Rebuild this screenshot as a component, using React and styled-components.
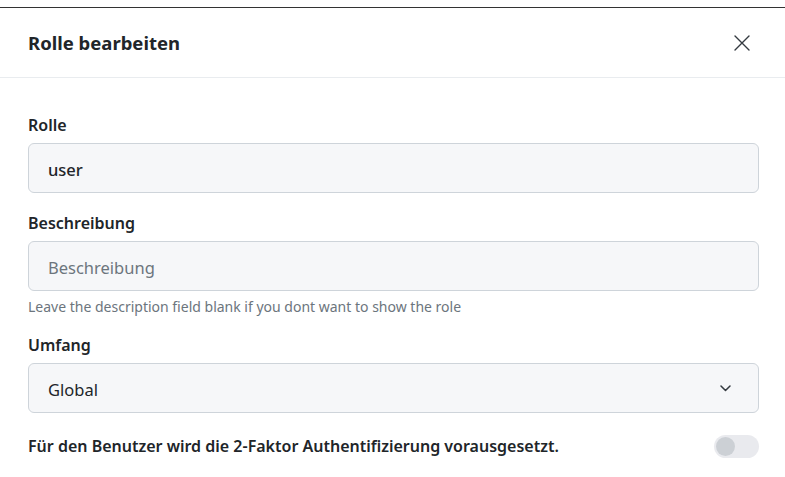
import React, { useState } from 'react';
import styled, { createGlobalStyle } from 'styled-components';

const GlobalStyle = createGlobalStyle`
  html, body {
    margin: 0;
    padding: 0;
    background: #ffffff;
  }
  body {
    font-family: "Noto Sans", "Open Sans", Arial, sans-serif;
    color: #212529;
  }
  * {
    box-sizing: border-box;
  }
`;

const Modal = styled.div`
  margin-top: 7px;
  border-top: 1px solid #333333;
  background: #ffffff;
`;

const Header = styled.div`
  display: flex;
  align-items: center;
  justify-content: space-between;
  height: 70px;
  padding: 0 28px;
  border-bottom: 1px solid #e9ecef;
`;

const Title = styled.h2`
  margin: 0;
  font-size: 18.5px;
  font-weight: 700;
  color: #212529;
`;

const CloseButton = styled.button`
  display: flex;
  align-items: center;
  justify-content: center;
  width: 30px;
  height: 30px;
  padding: 0;
  border: none;
  background: transparent;
  color: #343a40;
  cursor: pointer;
`;

const Body = styled.div`
  padding: 35px 26px 20px 28px;
`;

const Field = styled.div`
  display: flex;
  flex-direction: column;
  margin-top: ${({ $top }) => $top || 0}px;
`;

const Label = styled.label`
  font-size: 16px;
  line-height: 24px;
  font-weight: 600;
  color: #212529;
  margin-bottom: 6px;
`;

const Input = styled.input`
  height: 50px;
  padding: 3px 19px 0;
  font-family: inherit;
  font-size: 16.5px;
  font-weight: ${({ $strong }) => ($strong ? 500 : 400)};
  color: #212529;
  background: #f6f7f9;
  border: 1px solid #ced4da;
  border-radius: 6px;
  outline: none;

  &::placeholder {
    color: #6c757d;
  }
`;

const Help = styled.div`
  margin-top: 6px;
  font-size: 14px;
  line-height: 20px;
  color: #6c757d;
`;

const Select = styled.div`
  display: flex;
  align-items: center;
  justify-content: space-between;
  height: 50px;
  padding: 3px 27px 0 19px;
  font-size: 16.5px;
  color: #212529;
  background: #f6f7f9;
  border: 1px solid #ced4da;
  border-radius: 6px;
`;

const Chevron = styled.svg`
  margin-top: -3px;
`;

const ToggleRow = styled.div`
  display: flex;
  align-items: center;
  justify-content: space-between;
  height: 24px;
  margin-top: 21px;
`;

const ToggleText = styled.span`
  font-size: 16px;
  font-weight: 600;
  color: #212529;
`;

const Switch = styled.button`
  position: relative;
  width: 45px;
  height: 23px;
  padding: 0;
  border: none;
  border-radius: 12px;
  background: ${({ $on }) => ($on ? '#0d6efd' : '#e9eaee')};
  cursor: pointer;
`;

const Knob = styled.span`
  position: absolute;
  top: 2px;
  left: ${({ $on }) => ($on ? '24px' : '2px')};
  width: 19px;
  height: 19px;
  border-radius: 50%;
  background: ${({ $on }) => ($on ? '#ffffff' : '#ccd0d5')};
`;

function App() {
  const [twoFactor, setTwoFactor] = useState(false);

  return (
    <>
      <GlobalStyle />
      <Modal>
        <Header>
          <Title>Rolle bearbeiten</Title>
          <CloseButton aria-label="Schließen">
            <svg width="16" height="16" viewBox="0 0 16 16" fill="none" stroke="currentColor" strokeWidth="1.4" strokeLinecap="round">
              <path d="M1 1L15 15M15 1L1 15" />
            </svg>
          </CloseButton>
        </Header>
        <Body>
          <Field>
            <Label>Rolle</Label>
            <Input $strong defaultValue="user" />
          </Field>
          <Field $top={18}>
            <Label>Beschreibung</Label>
            <Input placeholder="Beschreibung" />
            <Help>Leave the description field blank if you dont want to show the role</Help>
          </Field>
          <Field $top={16}>
            <Label>Umfang</Label>
            <Select>
              <span>Global</span>
              <Chevron width="11" height="7" viewBox="0 0 11 7" fill="none" stroke="#343a40" strokeWidth="1.5" strokeLinecap="round" strokeLinejoin="round">
                <path d="M1 1L5.5 5.5L10 1" />
              </Chevron>
            </Select>
          </Field>
          <ToggleRow>
            <ToggleText>Für den Benutzer wird die 2-Faktor Authentifizierung vorausgesetzt.</ToggleText>
            <Switch $on={twoFactor} onClick={() => setTwoFactor(!twoFactor)} aria-label="2-Faktor">
              <Knob $on={twoFactor} />
            </Switch>
          </ToggleRow>
        </Body>
      </Modal>
    </>
  );
}

export default App;
